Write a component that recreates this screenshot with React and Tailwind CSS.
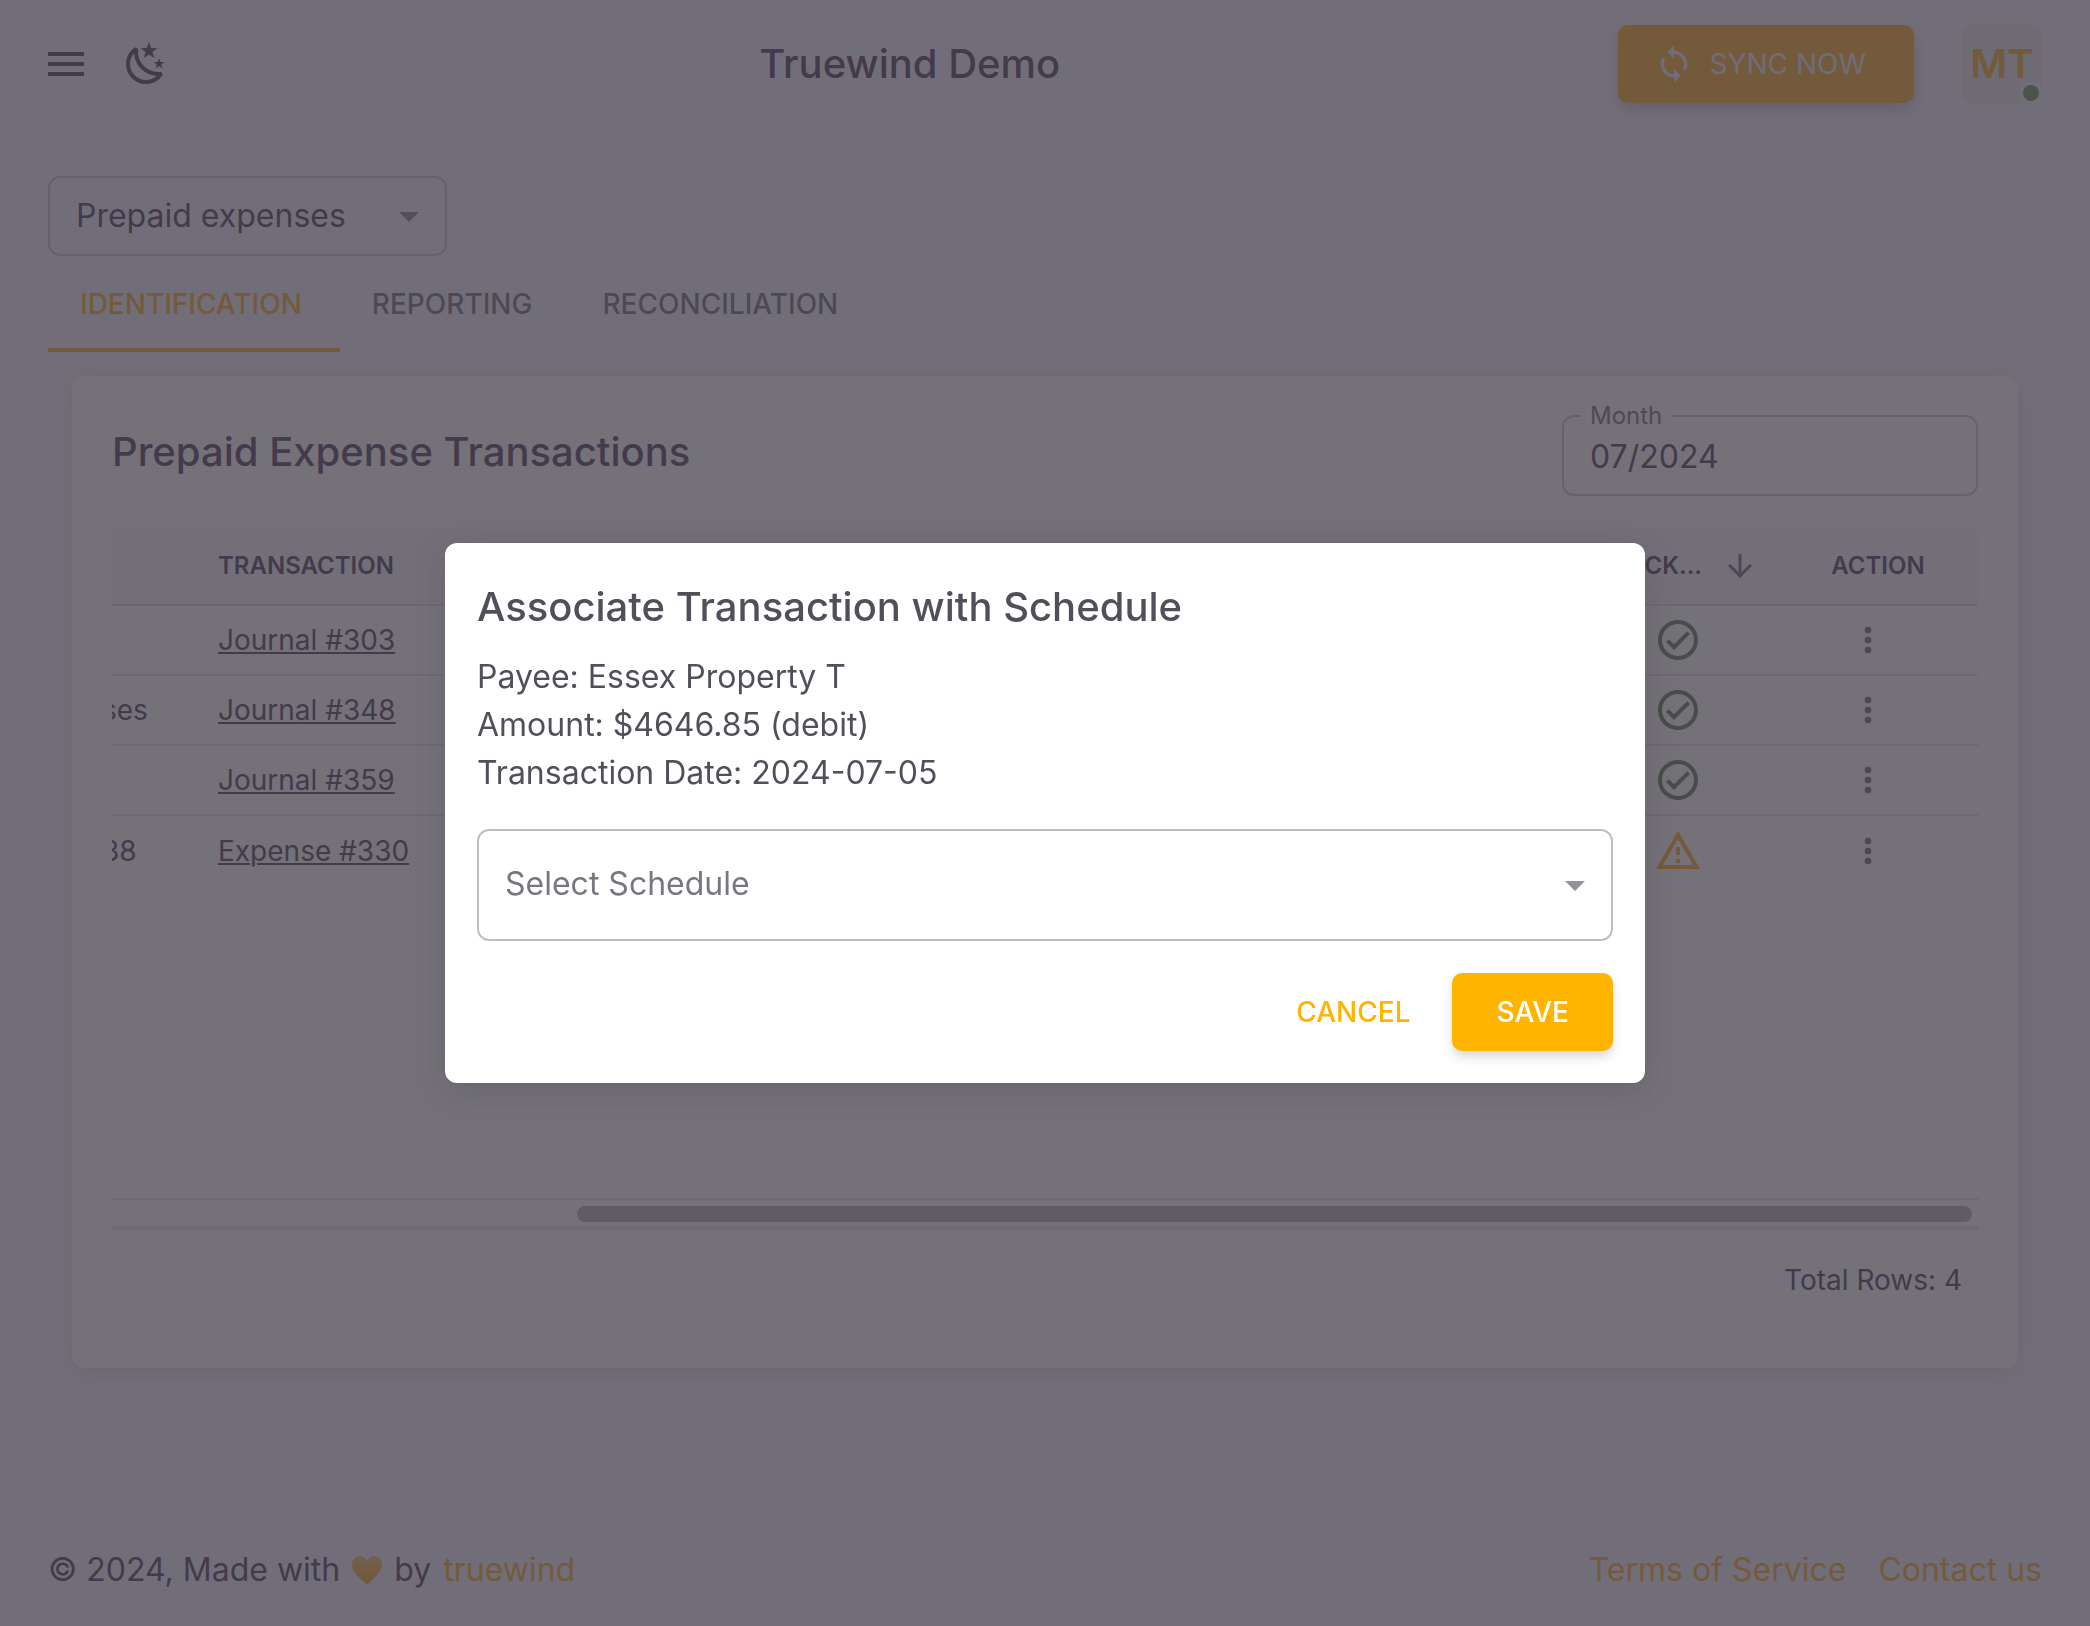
const FONT = 'font-["Inter","Liberation_Sans",sans-serif]';

const PATHS = {
  menu: "M3 6h18v2H3V6m0 5h18v2H3v-2m0 5h18v2H3v-2Z",
  moon: "M17.75 4.09L15.22 6.03L16.13 9.09L13.5 7.28L10.87 9.09L11.78 6.03L9.25 4.09L12.44 4L13.5 1L14.56 4L17.75 4.09M21.25 11L19.61 12.25L20.2 14.23L18.5 13.06L16.8 14.23L17.39 12.25L15.75 11L17.81 10.95L18.5 9L19.19 10.95L21.25 11M18.97 15.95C19.8 15.87 20.69 17.05 20.16 17.8C19.84 18.25 19.5 18.67 19.08 19.07C15.17 23 8.84 23 4.94 19.07C1.03 15.17 1.03 8.83 4.94 4.93C5.34 4.53 5.76 4.17 6.21 3.85C6.96 3.32 8.14 4.21 8.06 5.04C7.79 7.9 8.75 10.87 10.95 13.06C13.14 15.26 16.1 16.22 18.97 15.95M17.33 17.97C14.5 17.81 11.7 16.64 9.53 14.5C7.36 12.31 6.2 9.5 6.04 6.68C3.23 9.82 3.34 14.64 6.35 17.66C9.37 20.67 14.19 20.78 17.33 17.97Z",
  sync: "M12 4V1L8 5l4 4V6c3.31 0 6 2.69 6 6 0 1.01-.25 1.97-.7 2.8l1.46 1.46C19.54 15.03 20 13.57 20 12c0-4.42-3.58-8-8-8zm0 14c-3.31 0-6-2.69-6-6 0-1.01.25-1.97.7-2.8L5.24 7.74C4.46 8.97 4 10.43 4 12c0 4.42 3.58 8 8 8v3l4-4-4-4v3z",
  caret: "M7 10l5 5 5-5z",
  arrowDown: "M20 12l-1.41-1.41L13 16.17V4h-2v12.17l-5.58-5.59L4 12l8 8z",
  check: "M12 2C6.5 2 2 6.5 2 12S6.5 22 12 22 22 17.5 22 12 17.5 2 12 2M12 20C7.59 20 4 16.41 4 12S7.59 4 12 4 20 7.59 20 12 16.41 20 12 20M16.59 7.58L10 14.17L7.41 11.59L6 13L10 17L18 9L16.59 7.58Z",
  warning: "M12 5.99L19.53 19H4.47L12 5.99M12 2L1 21h22L12 2zm1 14h-2v2h2v-2zm0-6h-2v4h2v-4z",
  dots: "M12 16a2 2 0 1 1 0 4 2 2 0 0 1 0-4m0-6a2 2 0 1 1 0 4 2 2 0 0 1 0-4m0-6a2 2 0 1 1 0 4 2 2 0 0 1 0-4Z",
};

function Icon({ name, className, viewBox = "0 0 24 24" }) {
  return (
    <svg viewBox={viewBox} fill="currentColor" aria-hidden="true" className={`shrink-0 ${className}`}>
      <path d={PATHS[name]} />
    </svg>
  );
}

function Header() {
  return (
    <header className="flex h-32 items-center justify-between px-12">
      <div className="flex items-center gap-[38px] pr-8">
        <button type="button" aria-label="Open menu">
          <Icon name="menu" viewBox="3 0 18 24" className="h-12 w-9" />
        </button>
        <button type="button" aria-label="Toggle dark mode">
          <Icon name="moon" className="size-12" />
        </button>
      </div>
      <h1 className="text-[40px] font-medium leading-16">Truewind Demo</h1>
      <div className="flex items-center gap-12">
        <button
          type="button"
          className="flex h-[78px] items-center gap-4 rounded-[10px] bg-[#f5b22d] pl-9 pr-12 text-[28px] text-[#eeeef8] shadow-[0_6px_16px_-2px_rgba(58,53,65,0.3)]"
        >
          <Icon name="sync" className="size-10" />
          SYNC NOW
        </button>
        <button
          type="button"
          aria-label="Account"
          className="relative flex size-20 items-center justify-center rounded-xl bg-[#eceae8] text-[40px] font-semibold text-[#f5b22d]"
        >
          MT
          <span className="absolute -bottom-px -right-px size-6 rounded-full border-4 border-[#f4f5fa] bg-[#6f9d5f]" />
        </button>
      </div>
    </header>
  );
}

function Tabs() {
  const tabs = ["IDENTIFICATION", "REPORTING", "RECONCILIATION"];
  return (
    <div role="tablist" className="flex">
      {tabs.map((tab, i) => (
        <button
          key={tab}
          type="button"
          role="tab"
          aria-selected={i === 0}
          className={`h-24 border-b-4 pl-8 pr-[38px] pt-1 text-[28px] font-medium ${
            i === 0 ? "border-[#f5b22d] text-[#f5b22d]" : "border-transparent text-[#3a3541]/68"
          }`}
        >
          {tab}
        </button>
      ))}
    </div>
  );
}

const ROWS = [
  { account: "", transaction: "Journal #303", ok: true },
  { account: "ses", transaction: "Journal #348", ok: true },
  { account: "", transaction: "Journal #359", ok: true },
  { account: "38", transaction: "Expense #330", ok: false },
];

function TransactionTable() {
  return (
    <table className="w-full table-fixed border-separate border-spacing-0 text-left">
      <colgroup>
        <col className="w-[106px]" />
        <col />
        <col className="w-[212px]" />
        <col className="w-[220px]" />
      </colgroup>
      <thead>
        <tr className="h-[78px] text-2xl">
          <th className="rounded-tl-xl border-b-2 border-[#3a3541]/12 bg-[#f7f8fa] p-0" />
          <th className="border-b-2 border-[#3a3541]/12 bg-[#f7f8fa] p-0 font-semibold">TRANSACTION</th>
          <th className="border-b-2 border-[#3a3541]/12 bg-[#f7f8fa] p-0 font-semibold">
            <span className="flex items-center justify-end gap-5">
              TRACK...
              <Icon name="arrowDown" className="size-9 text-[#3a3541]/68" />
            </span>
          </th>
          <th className="rounded-tr-xl border-b-2 border-[#3a3541]/12 bg-[#f7f8fa] p-0 pl-5 text-center font-semibold">
            ACTION
          </th>
        </tr>
      </thead>
      <tbody className="text-[28px] leading-10 [&>tr:not(:last-child)>td]:border-b-2 [&>tr>td]:border-[#3a3541]/12">
        {ROWS.map((row) => (
          <tr key={row.transaction} className="h-[70px]">
            <td className="overflow-hidden p-0">
              <span className="-ml-[10px] block">{row.account}</span>
            </td>
            <td className="p-0">
              <a href="#" className="underline decoration-2 underline-offset-2">
                {row.transaction}
              </a>
            </td>
            <td className="p-0 pl-[108px]">
              {row.ok ? (
                <Icon name="check" className="size-12 text-[#64895a]" />
              ) : (
                <Icon name="warning" className="size-12 text-[#f5b22d]" />
              )}
            </td>
            <td className="p-0">
              <button type="button" aria-label={`Actions for ${row.transaction}`} className="mx-auto block">
                <Icon name="dots" className="size-10 text-[#3a3541]/68" />
              </button>
            </td>
          </tr>
        ))}
      </tbody>
    </table>
  );
}

function TransactionsCard() {
  return (
    <section className="mx-6 mt-6 rounded-xl bg-[#fbfdf7] px-10 pb-[66px] pt-10 shadow-[0_4px_20px_rgba(58,53,65,0.12)]">
      <div className="flex items-start justify-between">
        <h2 className="pt-1 text-[40px] font-medium leading-16">Prepaid Expense Transactions</h2>
        <fieldset className="-mt-[14px] h-[94px] w-[416px] rounded-xl border-2 border-[#3a3541]/23 pl-4">
          <legend className="px-2 text-2xl leading-7 text-[#3a3541]/68">
            <label htmlFor="month" className="px-[2px]">Month</label>
          </legend>
          <input
            id="month"
            defaultValue="07/2024"
            className="block h-[52px] w-full bg-transparent px-[10px] text-[32px] leading-12 outline-none"
          />
        </fieldset>
      </div>
      <div className="mt-8 min-h-[672px] border-b-2 border-[#3a3541]/12">
        <TransactionTable />
      </div>
      <div className="flex h-[30px] justify-end border-b-4 border-[#3a3541]/10 pr-[6px] pt-[6px]">
        <div className="h-4 w-3/4 rounded-full bg-[#b8b8c0]" />
      </div>
      <p className="px-4 pt-7 text-right text-[28px] leading-11">Total Rows: 4</p>
    </section>
  );
}

function Footer() {
  return (
    <footer className="flex items-center justify-between px-12 pb-8 text-[32px] leading-12">
      <p className="flex items-center gap-3">
        © 2024, Made with
        <svg viewBox="0 0 30 29" className="h-[29px] w-[30px]" role="img" aria-label="love">
          <defs>
            <linearGradient id="heart" x1="0" y1="0" x2="0" y2="1">
              <stop offset="0" stopColor="#f2c470" />
              <stop offset="0.6" stopColor="#f5b43a" />
              <stop offset="1" stopColor="#f0a820" />
            </linearGradient>
          </defs>
          <path
            d="M15 29C12 25 0 18 0 8.500C0 3.500 3.500 0 7.700 0C11 0 13.800 1.800 15 4.800C16.200 1.800 19 0 22.300 0C26.500 0 30 3.500 30 8.500C30 18 18 25 15 29Z"
            fill="url(#heart)"
          />
        </svg>
        by
        <a href="#" className="text-[#f5b22d]">truewind</a>
      </p>
      <nav className="flex gap-8 text-[#f5b22d]">
        <a href="#">Terms of Service</a>
        <a href="#">Contact us</a>
      </nav>
    </footer>
  );
}

function ScheduleDialog() {
  return (
    <div className="fixed inset-0 flex items-center justify-center bg-[#3a3541]/70">
      <div
        role="dialog"
        aria-modal="true"
        aria-labelledby="dialog-title"
        className="w-[1200px] max-w-full rounded-xl bg-white p-8 text-[32px] leading-12 text-[#3a3541]/87 shadow-[0_8px_32px_rgba(58,53,65,0.2)]"
      >
        <h2 id="dialog-title" className="text-[40px] font-medium leading-16">
          Associate Transaction with Schedule
        </h2>
        <div className="pb-8 pt-[14px]">
          <p>Payee: Essex Property T</p>
          <p>Amount: $4646.85 (debit)</p>
          <p>Transaction Date: 2024-07-05</p>
        </div>
        <div className="relative">
          <select
            aria-label="Select Schedule"
            className="h-28 w-full appearance-none rounded-xl border-2 border-[#3a3541]/32 bg-transparent px-[26px] pb-[2px] text-[#3a3541]/68"
          >
            <option>Select Schedule</option>
          </select>
          <Icon name="caret" className="pointer-events-none absolute right-[14px] top-8 size-12 text-[#3a3541]/54" />
        </div>
        <div className="flex justify-end gap-4 pt-8 text-[28px] font-medium">
          <button type="button" className="h-[78px] px-[26px] text-[#ffb400]">CANCEL</button>
          <button
            type="button"
            className="h-[78px] rounded-[10px] bg-[#ffb400] px-11 text-white shadow-[0_6px_12px_-2px_rgba(58,53,65,0.25)]"
          >
            SAVE
          </button>
        </div>
      </div>
    </div>
  );
}

export default function App() {
  return (
    <div className={`${FONT} min-h-screen bg-[#f4f5fa] text-[#584864]`}>
      <div className="flex min-h-screen flex-col">
        <Header />
        <main className="grow px-12 pt-12">
          <div className="relative w-[399px]">
            <select
              aria-label="Category"
              className="block h-20 w-full appearance-none rounded-xl border-2 border-[#3a3541]/23 bg-transparent px-[26px] text-[32px]"
            >
              <option>Prepaid expenses</option>
            </select>
            <Icon name="caret" className="pointer-events-none absolute right-[14px] top-4 size-12 text-[#3a3541]/54" />
          </div>
          <Tabs />
          <TransactionsCard />
        </main>
        <Footer />
      </div>
      <ScheduleDialog />
    </div>
  );
}
